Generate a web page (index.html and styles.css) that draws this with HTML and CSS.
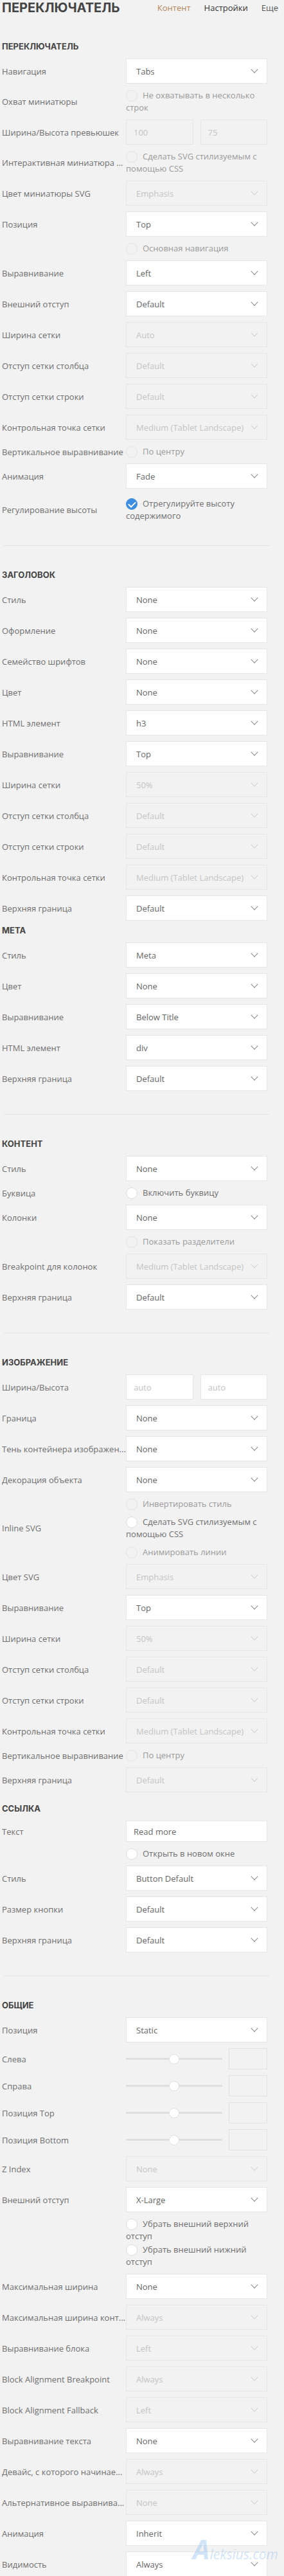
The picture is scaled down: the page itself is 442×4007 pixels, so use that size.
FILE: index.html
```html
<!DOCTYPE html>
<html lang="ru">
<head>
    <meta charset="UTF-8">
    <meta name="viewport" content="width=device-width, initial-scale=1.0">
    <title>Переключатель — настройки</title>
    <link rel="stylesheet" href="styles.css">
</head>
<body>
    <header class="top">
        <h1 class="title">ПЕРЕКЛЮЧАТЕЛЬ</h1>
        <nav class="tabs">
            <a class="tab tab-first">Контент</a>
            <a class="tab tab-active">Настройки</a>
            <a class="tab">Еще</a>
        </nav>
    </header>

    <div class="page">
        <section class="group group-first">
            <h2 class="group-title">ПЕРЕКЛЮЧАТЕЛЬ</h2>
            <div class="row"><span class="label">Навигация</span><div class="select">Tabs</div></div>
            <div class="row"><span class="label">Охват миниатюры</span>
                <div class="checks"><label class="check off"><span class="radio"></span>Не охватывать в несколько строк</label></div>
            </div>
            <div class="row"><span class="label">Ширина/Высота превьюшек</span>
                <div class="pair"><input class="field" type="text" placeholder="100" disabled><input class="field" type="text" placeholder="75" disabled></div>
            </div>
            <div class="row"><span class="label">Интерактивная миниатюра ...</span>
                <div class="checks"><label class="check off"><span class="radio"></span>Сделать SVG стилизуемым с помощью CSS</label></div>
            </div>
            <div class="row"><span class="label">Цвет миниатюры SVG</span><div class="select off">Emphasis</div></div>
            <div class="row"><span class="label">Позиция</span><div class="select">Top</div></div>
            <div class="row"><span class="label"></span>
                <div class="checks"><label class="check off"><span class="radio"></span>Основная навигация</label></div>
            </div>
            <div class="row"><span class="label">Выравнивание</span><div class="select">Left</div></div>
            <div class="row"><span class="label">Внешний отступ</span><div class="select">Default</div></div>
            <div class="row"><span class="label">Ширина сетки</span><div class="select off">Auto</div></div>
            <div class="row"><span class="label">Отступ сетки столбца</span><div class="select off">Default</div></div>
            <div class="row"><span class="label">Отступ сетки строки</span><div class="select off">Default</div></div>
            <div class="row"><span class="label">Контрольная точка сетки</span><div class="select off">Medium (Tablet Landscape)</div></div>
            <div class="row"><span class="label">Вертикальное выравнивание</span>
                <div class="checks"><label class="check off"><span class="radio"></span>По центру</label></div>
            </div>
            <div class="row"><span class="label">Анимация</span><div class="select">Fade</div></div>
            <div class="row row-spaced"><span class="label">Регулирование высоты</span>
                <div class="checks"><label class="check"><span class="radio radio-on"></span>Отрегулируйте высоту содержимого</label></div>
            </div>
        </section>

        <hr class="divider">

        <section class="group">
            <h2 class="group-title">ЗАГОЛОВОК</h2>
            <div class="row"><span class="label">Стиль</span><div class="select">None</div></div>
            <div class="row"><span class="label">Оформление</span><div class="select">None</div></div>
            <div class="row"><span class="label">Семейство шрифтов</span><div class="select">None</div></div>
            <div class="row"><span class="label">Цвет</span><div class="select">None</div></div>
            <div class="row"><span class="label">HTML элемент</span><div class="select">h3</div></div>
            <div class="row"><span class="label">Выравнивание</span><div class="select">Top</div></div>
            <div class="row"><span class="label">Ширина сетки</span><div class="select off">50%</div></div>
            <div class="row"><span class="label">Отступ сетки столбца</span><div class="select off">Default</div></div>
            <div class="row"><span class="label">Отступ сетки строки</span><div class="select off">Default</div></div>
            <div class="row"><span class="label">Контрольная точка сетки</span><div class="select off">Medium (Tablet Landscape)</div></div>
            <div class="row"><span class="label">Верхняя граница</span><div class="select">Default</div></div>
        </section>

        <section class="group group-near">
            <h2 class="group-title">МЕТА</h2>
            <div class="row"><span class="label">Стиль</span><div class="select">Meta</div></div>
            <div class="row"><span class="label">Цвет</span><div class="select">None</div></div>
            <div class="row"><span class="label">Выравнивание</span><div class="select">Below Title</div></div>
            <div class="row"><span class="label">HTML элемент</span><div class="select">div</div></div>
            <div class="row"><span class="label">Верхняя граница</span><div class="select">Default</div></div>
        </section>

        <hr class="divider">

        <section class="group">
            <h2 class="group-title">КОНТЕНТ</h2>
            <div class="row"><span class="label">Стиль</span><div class="select">None</div></div>
            <div class="row"><span class="label">Буквица</span>
                <div class="checks"><label class="check"><span class="radio"></span>Включить буквицу</label></div>
            </div>
            <div class="row"><span class="label">Колонки</span><div class="select">None</div></div>
            <div class="row"><span class="label"></span>
                <div class="checks"><label class="check off"><span class="radio"></span>Показать разделители</label></div>
            </div>
            <div class="row"><span class="label">Breakpoint для колонок</span><div class="select off">Medium (Tablet Landscape)</div></div>
            <div class="row"><span class="label">Верхняя граница</span><div class="select">Default</div></div>
        </section>

        <hr class="divider">

        <section class="group">
            <h2 class="group-title">ИЗОБРАЖЕНИЕ</h2>
            <div class="row"><span class="label">Ширина/Высота</span>
                <div class="pair"><input class="field" type="text" placeholder="auto"><input class="field" type="text" placeholder="auto"></div>
            </div>
            <div class="row"><span class="label">Граница</span><div class="select">None</div></div>
            <div class="row"><span class="label">Тень контейнера изображен...</span><div class="select">None</div></div>
            <div class="row"><span class="label">Декорация объекта</span><div class="select">None</div></div>
            <div class="row"><span class="label">Inline SVG</span>
                <div class="checks">
                    <label class="check off"><span class="radio"></span>Инвертировать стиль</label>
                    <label class="check"><span class="radio"></span>Сделать SVG стилизуемым с помощью CSS</label>
                    <label class="check off"><span class="radio"></span>Анимировать линии</label>
                </div>
            </div>
            <div class="row"><span class="label">Цвет SVG</span><div class="select off">Emphasis</div></div>
            <div class="row"><span class="label">Выравнивание</span><div class="select">Top</div></div>
            <div class="row"><span class="label">Ширина сетки</span><div class="select off">50%</div></div>
            <div class="row"><span class="label">Отступ сетки столбца</span><div class="select off">Default</div></div>
            <div class="row"><span class="label">Отступ сетки строки</span><div class="select off">Default</div></div>
            <div class="row"><span class="label">Контрольная точка сетки</span><div class="select off">Medium (Tablet Landscape)</div></div>
            <div class="row"><span class="label">Вертикальное выравнивание</span>
                <div class="checks"><label class="check off"><span class="radio"></span>По центру</label></div>
            </div>
            <div class="row"><span class="label">Верхняя граница</span><div class="select off">Default</div></div>
        </section>

        <section class="group group-mid">
            <h2 class="group-title">ССЫЛКА</h2>
            <div class="row"><span class="label">Текст</span><input class="field field-short" type="text" value="Read more"></div>
            <div class="row"><span class="label"></span>
                <div class="checks"><label class="check"><span class="radio"></span>Открыть в новом окне</label></div>
            </div>
            <div class="row"><span class="label">Стиль</span><div class="select">Button Default</div></div>
            <div class="row"><span class="label">Размер кнопки</span><div class="select">Default</div></div>
            <div class="row"><span class="label">Верхняя граница</span><div class="select">Default</div></div>
        </section>

        <hr class="divider">

        <section class="group">
            <h2 class="group-title">ОБЩИЕ</h2>
            <div class="row"><span class="label">Позиция</span><div class="select">Static</div></div>
            <div class="row"><span class="label">Слева</span>
                <div class="slider"><div class="track"><span class="thumb"></span></div><span class="num"></span></div>
            </div>
            <div class="row"><span class="label">Справа</span>
                <div class="slider"><div class="track"><span class="thumb"></span></div><span class="num"></span></div>
            </div>
            <div class="row"><span class="label">Позиция Top</span>
                <div class="slider"><div class="track"><span class="thumb"></span></div><span class="num"></span></div>
            </div>
            <div class="row"><span class="label">Позиция Bottom</span>
                <div class="slider"><div class="track"><span class="thumb"></span></div><span class="num"></span></div>
            </div>
            <div class="row"><span class="label">Z Index</span><div class="select off">None</div></div>
            <div class="row"><span class="label">Внешний отступ</span><div class="select">X-Large</div></div>
            <div class="row"><span class="label"></span>
                <div class="checks checks-tight">
                    <label class="check"><span class="radio"></span>Убрать внешний верхний отступ</label>
                    <label class="check"><span class="radio"></span>Убрать внешний нижний отступ</label>
                </div>
            </div>
            <div class="row"><span class="label">Максимальная ширина</span><div class="select">None</div></div>
            <div class="row"><span class="label">Максимальная ширина конт...</span><div class="select off">Always</div></div>
            <div class="row"><span class="label">Выравнивание блока</span><div class="select off">Left</div></div>
            <div class="row"><span class="label">Block Alignment Breakpoint</span><div class="select off">Always</div></div>
            <div class="row"><span class="label">Block Alignment Fallback</span><div class="select off">Left</div></div>
            <div class="row"><span class="label">Выравнивание текста</span><div class="select">None</div></div>
            <div class="row"><span class="label">Девайс, с которого начинае...</span><div class="select off">Always</div></div>
            <div class="row"><span class="label">Альтернативное выравнива...</span><div class="select off">None</div></div>
            <div class="row"><span class="label">Анимация</span><div class="select">Inherit</div></div>
            <div class="row"><span class="label">Видимость</span><div class="select">Always</div></div>
        </section>
    </div>

    <div class="watermark"><span class="wm-logo">A</span>leksius.com</div>
</body>
</html>
```

FILE: styles.css
```css
body {
    margin: 0;
    background-color: #f2f2f2;
    font-family: "Open Sans", "Liberation Sans", sans-serif;
    font-size: 13px;
    color: #666;
    position: relative;
}

.top {
    display: flex;
    align-items: center;
    height: 24px;
    padding: 0 9px 0 3px;
}

.title {
    margin: 0;
    font-family: Inter, "Open Sans", sans-serif;
    font-size: 20px;
    font-weight: 700;
    line-height: 20px;
    color: #444;
}

.tabs {
    margin-left: auto;
    display: flex;
    gap: 21px;
    font-size: 13px;
}

.tab {
    color: #555;
}

.tab-first {
    color: #b4875c;
}

.tab-active {
    color: #333;
}

.page {
    width: 413px;
    padding-left: 3px;
}

.group {
    display: flex;
    flex-direction: column;
    gap: 9px;
}

.group-first {
    margin-top: 38px;
}

.group-near {
    margin-top: 5px;
}

.group-mid {
    margin-top: 15px;
}

.group-title {
    margin: 0;
    font-family: Inter, "Open Sans", sans-serif;
    font-size: 13px;
    font-weight: 700;
    line-height: 20px;
    color: #444;
}

.row {
    display: grid;
    grid-template-columns: 193px 220px;
    align-items: center;
}

.row-spaced {
    margin-top: 5px;
}

.label {
    color: #6f6f6f;
    white-space: nowrap;
    overflow: hidden;
}

.select {
    height: 39px;
    box-sizing: border-box;
    border: 1px solid #e6e6e6;
    background: #fff;
    display: flex;
    align-items: center;
    justify-content: space-between;
    padding: 0 15px 0 15px;
    color: #666;
}

.select::after {
    content: "";
    width: 8px;
    height: 8px;
    box-sizing: border-box;
    border-right: 1.5px solid #8a8a8a;
    border-bottom: 1.5px solid #8a8a8a;
    transform: rotate(45deg);
    margin-top: -5px;
}

.select.off {
    background: #f2f2f2;
    color: #c4c4c4;
}

.select.off::after {
    border-color: #d2d2d2;
}

.pair {
    display: grid;
    grid-template-columns: 1fr 1fr;
    gap: 11px;
}

.field {
    height: 39px;
    width: 100%;
    box-sizing: border-box;
    border: 1px solid #e6e6e6;
    background: #fff;
    padding: 0 11px;
    font: inherit;
    color: #666;
    outline: none;
}

.field::placeholder {
    color: #c4c4c4;
}

.field:disabled {
    background: #f2f2f2;
}

.field-short {
    height: 33px;
}

.checks {
    display: flex;
    flex-direction: column;
    gap: 9px;
}

.checks-tight {
    gap: 2px;
}

.check {
    line-height: 19px;
    color: #6f6f6f;
}

.check.off {
    color: #9a9a9a;
}

.radio {
    display: inline-block;
    width: 18px;
    height: 18px;
    box-sizing: border-box;
    border: 1px solid #dcdcdc;
    border-radius: 50%;
    background: #fff;
    vertical-align: -5px;
    margin-right: 8px;
    position: relative;
}

.check.off .radio {
    background: transparent;
    border-color: #e2e2e2;
}

.radio-on {
    background: #3d8ee3;
    border-color: #3d8ee3;
}

.radio-on::after {
    content: "";
    position: absolute;
    left: 5px;
    top: 2px;
    width: 5px;
    height: 9px;
    border-right: 2px solid #fff;
    border-bottom: 2px solid #fff;
    transform: rotate(45deg);
}

.slider {
    display: flex;
    align-items: center;
    gap: 10px;
}

.track {
    flex: 1;
    height: 3px;
    background: #dedede;
    border-radius: 2px;
    display: flex;
    justify-content: center;
    align-items: center;
}

.thumb {
    width: 16px;
    height: 16px;
    box-sizing: border-box;
    border-radius: 50%;
    background: #fff;
    border: 1px solid #e0e0e0;
    flex-shrink: 0;
}

.num {
    width: 60px;
    height: 33px;
    box-sizing: border-box;
    border: 1px solid #e2e2e2;
}

.divider {
    border: 0;
    border-top: 1px solid #e3e3e3;
    width: 413px;
    margin: 36px 0 35px 3px;
}

.watermark {
    position: absolute;
    left: 300px;
    top: 3936px;
    font-family: "Open Sans", sans-serif;
    font-style: italic;
    font-size: 21px;
    white-space: nowrap;
    color: rgba(150, 195, 240, 0.45);
}

.wm-logo {
    font-size: 42px;
    font-weight: 700;
}
```
